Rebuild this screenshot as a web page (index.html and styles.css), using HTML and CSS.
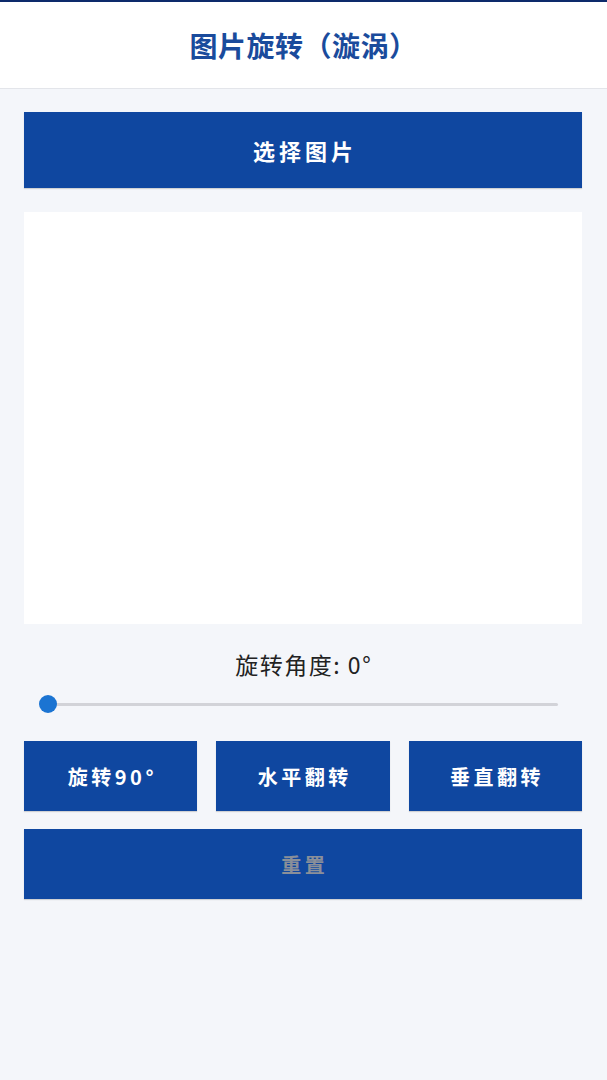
FILE: index.html
```html
<!DOCTYPE html>
<html lang="zh">
<head>
<meta charset="utf-8">
<link rel="stylesheet" href="styles.css">
</head>
<body>
<div class="topline"></div>
<header class="header"><h1 class="title">图片旋转（漩涡）</h1></header>
<main class="content">
  <button class="btn btn-select">选择图片</button>
  <div class="canvas"></div>
  <div class="angle">旋转角度: 0°</div>
  <div class="slider"><div class="track"></div><div class="thumb"></div></div>
  <div class="row">
    <button class="btn btn-small">旋转90°</button>
    <button class="btn btn-small">水平翻转</button>
    <button class="btn btn-small">垂直翻转</button>
  </div>
  <button class="btn btn-reset">重置</button>
</main>
</body>
</html>
```
FILE: styles.css
```css
html, body { margin: 0; padding: 0; }
body {
  background: #f4f6fa;
  font-family: "Noto Sans CJK SC", "Noto Sans", sans-serif;
  width: 607px;
  height: 1080px;
  overflow: hidden;
}
.topline { height: 2px; background: #0d2a6b; }
.header {
  height: 86px;
  background: #ffffff;
  border-bottom: 1px solid #e3e5ea;
  display: flex;
  align-items: center;
  justify-content: center;
}
.title {
  margin: 0;
  font-size: 28px;
  font-weight: 700;
  color: #1a4b9c;
  letter-spacing: 0.5px;
}
.content {
  padding: 23px 25px 0 24px;
  display: flex;
  flex-direction: column;
}
.btn {
  border: none;
  background: #0f47a0;
  color: #ffffff;
  font-family: "Noto Sans CJK SC", "Noto Sans", sans-serif;
  font-weight: 700;
  padding: 0;
  margin: 0;
  box-shadow: 0 1px 1px rgba(0,0,0,0.15);
}
.btn-select {
  height: 76px;
  font-size: 22px;
  letter-spacing: 4px;
  text-indent: 4px;
}
.canvas {
  margin-top: 24px;
  height: 412px;
  background: #ffffff;
}
.angle {
  margin-top: 24px;
  text-align: center;
  font-size: 23px;
  color: #222222;
  line-height: 32px;
  letter-spacing: 1.5px;
  text-indent: 1.5px;
}
.slider {
  position: relative;
  height: 18px;
  margin: 15px 24px 0 15px;
}
.track {
  position: absolute;
  left: 9px;
  right: 0;
  top: 8px;
  height: 3px;
  background: #d2d3d8;
  border-radius: 2px;
}
.thumb {
  position: absolute;
  left: 0;
  top: 0;
  width: 18px;
  height: 18px;
  border-radius: 50%;
  background: #1b74d2;
}
.row {
  margin-top: 28px;
  display: grid;
  grid-template-columns: 1fr 1fr 1fr;
  gap: 19px;
}
.btn-small {
  height: 70px;
  font-size: 20px;
  letter-spacing: 3.5px;
  text-indent: 3.5px;
}
.btn-reset {
  margin-top: 18px;
  height: 70px;
  font-size: 20px;
  letter-spacing: 3.5px;
  text-indent: 3.5px;
  color: #8a8f99;
}
```
